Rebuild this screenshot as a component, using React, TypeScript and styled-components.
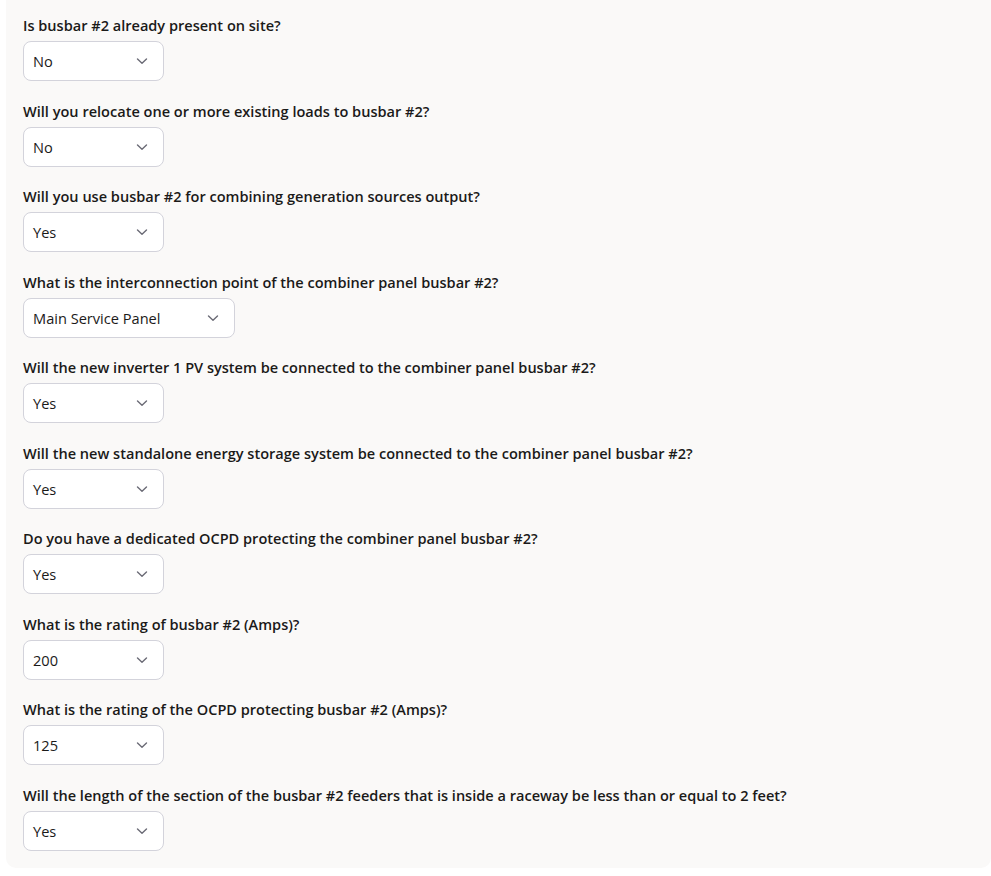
import React from "react";
import styled, { createGlobalStyle } from "styled-components";

const Global = createGlobalStyle`
  html, body { margin: 0; padding: 0; background: #ffffff; }
  body { font-family: "Open Sans", "Noto Sans", sans-serif; }
`;

const Panel = styled.div`
  margin: 0 0 8px 6px;
  padding: 15px 0 17px 17px;
  background: #faf9f8;
  border-radius: 0 0 10px 10px;
  display: flex;
  flex-direction: column;
  gap: 19.5px;
`;

const Field = styled.div`
  display: flex;
  flex-direction: column;
  align-items: flex-start;
  gap: 6px;
`;

const Label = styled.label`
  font-size: 14.55px;
  line-height: 20px;
  font-weight: 600;
  color: #1b1a19;
`;

const Select = styled.div`
  box-sizing: border-box;
  height: 40px;
  min-width: 141px;
  padding: 0 15px 0 9px;
  display: inline-flex;
  align-items: center;
  justify-content: space-between;
  gap: 46px;
  background: #ffffff;
  border: 1px solid #d3d3db;
  border-radius: 8px;
  font-size: 14.6px;
  color: #1b1a19;
`;

const Chevron = () => (
  <svg width="12" height="12" viewBox="0 0 12 12" fill="none">
    <path d="M1.5 4 L6 8.2 L10.5 4" stroke="#6b6b76" strokeWidth="1.4" strokeLinecap="round" strokeLinejoin="round" />
  </svg>
);

const fields: [string, string][] = [
  ["Is busbar #2 already present on site?", "No"],
  ["Will you relocate one or more existing loads to busbar #2?", "No"],
  ["Will you use busbar #2 for combining generation sources output?", "Yes"],
  ["What is the interconnection point of the combiner panel busbar #2?", "Main Service Panel"],
  ["Will the new inverter 1 PV system be connected to the combiner panel busbar #2?", "Yes"],
  ["Will the new standalone energy storage system be connected to the combiner panel busbar #2?", "Yes"],
  ["Do you have a dedicated OCPD protecting the combiner panel busbar #2?", "Yes"],
  ["What is the rating of busbar #2 (Amps)?", "200"],
  ["What is the rating of the OCPD protecting busbar #2 (Amps)?", "125"],
  ["Will the length of the section of the busbar #2 feeders that is inside a raceway be less than or equal to 2 feet?", "Yes"],
];

export default function App() {
  return (
    <>
      <Global />
      <Panel>
        {fields.map(([q, a]) => (
          <Field key={q}>
            <Label>{q}</Label>
            <Select>
              <span>{a}</span>
              <Chevron />
            </Select>
          </Field>
        ))}
      </Panel>
    </>
  );
}
